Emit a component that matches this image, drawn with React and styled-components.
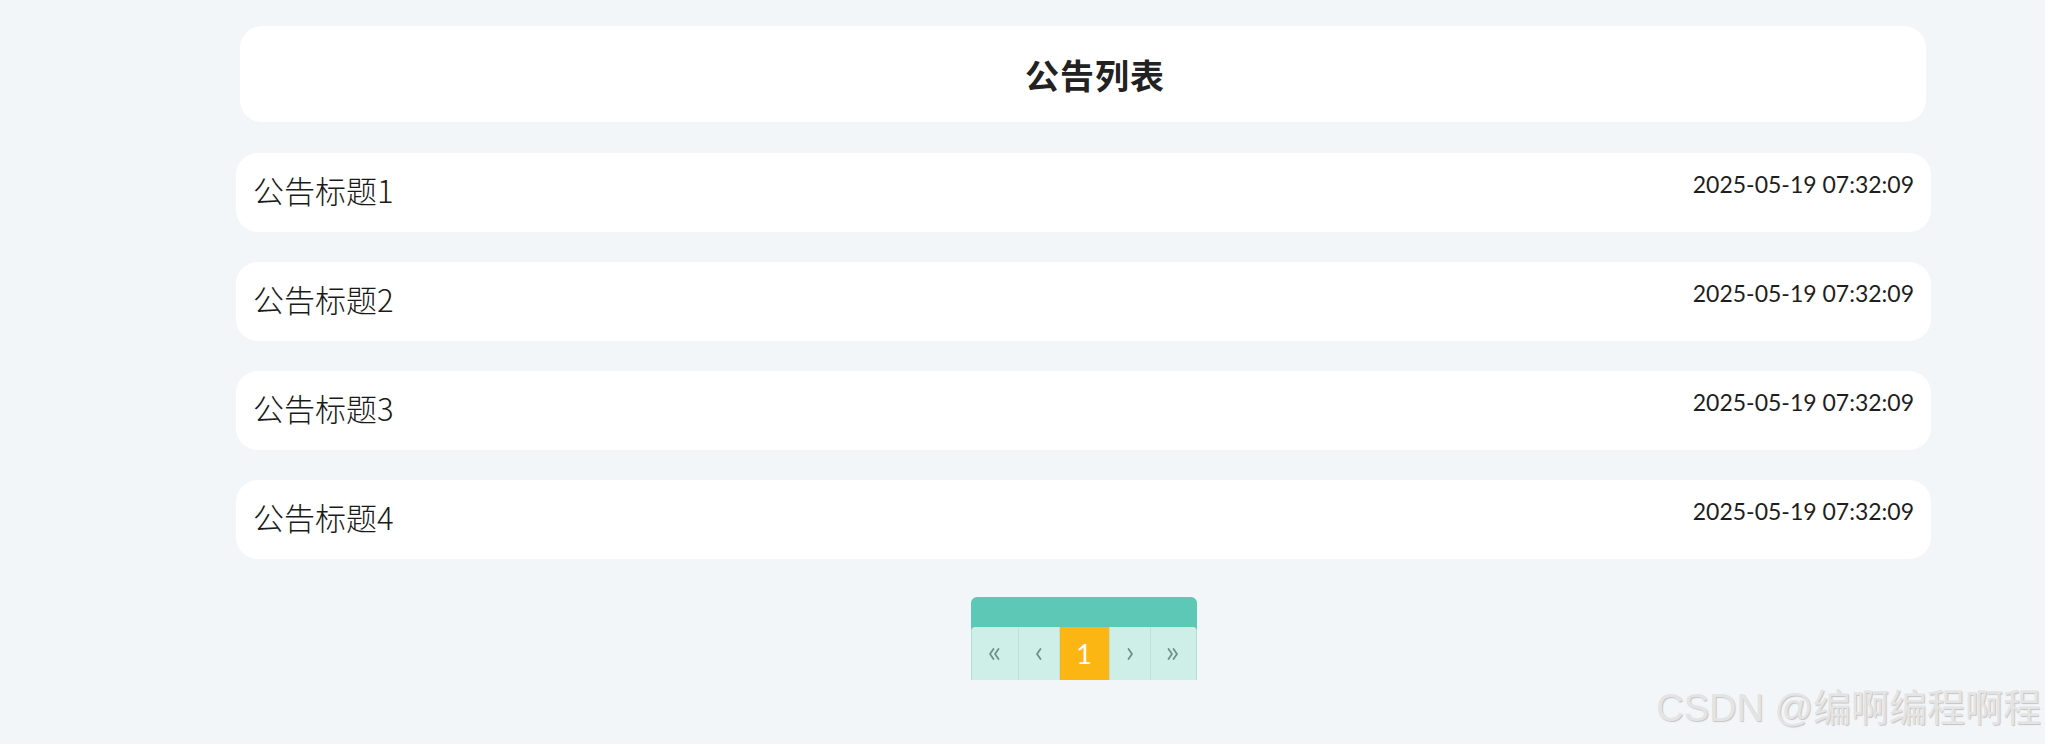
import React from 'react';
import styled, { createGlobalStyle } from 'styled-components';

const notices = [
  { id: 1, title: '公告标题1', time: '2025-05-19 07:32:09' },
  { id: 2, title: '公告标题2', time: '2025-05-19 07:32:09' },
  { id: 3, title: '公告标题3', time: '2025-05-19 07:32:09' },
  { id: 4, title: '公告标题4', time: '2025-05-19 07:32:09' },
];

const GlobalStyle = createGlobalStyle`
  html, body {
    margin: 0;
    padding: 0;
    background: #f3f6f9;
  }
  body {
    font-family: "Lato", "Noto Sans CJK SC", sans-serif;
    color: #222;
  }
`;

const Page = styled.div`
  position: relative;
  width: 2045px;
  height: 744px;
  box-sizing: border-box;
  padding: 26px 0 0 236px;
  overflow: hidden;
`;

const Container = styled.div`
  width: 1695px;
  display: flex;
  flex-direction: column;
`;

const Header = styled.div`
  height: 96px;
  margin: 0 5px 0 4px;
  background: #fff;
  border-radius: 22px;
  display: flex;
  align-items: center;
  justify-content: center;
  padding-left: 24px;
`;

const Title = styled.h2`
  margin: 0;
  font-family: "Noto Sans CJK SC", sans-serif;
  font-size: 34px;
  font-weight: 700;
  letter-spacing: 1px;
  color: #222;
`;

const List = styled.ul`
  list-style: none;
  margin: 31px 0 0;
  padding: 0;
  display: flex;
  flex-direction: column;
  gap: 30px;
`;

const Row = styled.li`
  height: 79px;
  background: #fff;
  border-radius: 22px;
  box-sizing: border-box;
  padding: 0 17px;
  display: flex;
  align-items: center;
  justify-content: space-between;
`;

const RowTitle = styled.span`
  font-family: "Noto Sans CJK SC", sans-serif;
  font-size: 31px;
  line-height: 1;
  font-weight: 300;
  color: #1a1a1a;
  margin-top: -6px;
`;

const RowTime = styled.span`
  align-self: flex-start;
  margin-top: 17px;
  font-size: 23px;
  font-weight: 400;
  color: #1e1e1e;
`;

const Pager = styled.div`
  align-self: center;
  margin-top: 38px;
  width: 226px;
  padding-top: 30px;
  background: #5dc8b6;
  border-radius: 6px 6px 0 0;
  display: flex;
`;

const PageBtn = styled.button`
  width: ${p => p.w}px;
  height: 53px;
  border: none;
  border-left: 1px solid #bfe1da;
  padding: 0;
  margin: 0;
  background: ${p => (p.active ? '#fbb614' : '#cdefe7')};
  color: ${p => (p.active ? '#ffffff' : '#6f8f8c')};
  font-family: "Lato", sans-serif;
  font-size: ${p => (p.active ? 27 : 17)}px;
  font-weight: 400;
  display: flex;
  align-items: center;
  justify-content: center;
  cursor: pointer;

  &:first-child {
    border-left: 1px solid #b5ddd4;
    border-radius: 4px 0 0 0;
  }
  &:last-child {
    border-right: 1px solid #b5ddd4;
    border-radius: 0 4px 0 0;
  }
`;

const Watermark = styled.div`
  position: absolute;
  right: 4px;
  bottom: 12px;
  font-family: "Liberation Sans", "Noto Sans CJK SC", sans-serif;
  font-size: 38px;
  font-weight: 400;
  color: #e4e4e4;
  text-shadow: 1px 1px 1px #c4c4c4;
  white-space: nowrap;
`;

const Chevron = ({ dir, double }) => {
  const d = dir === 'left' ? 'M5.5 2 L2 7 L5.5 12' : 'M2.5 2 L6 7 L2.5 12';
  return (
    <svg width={double ? 14 : 8} height="14" viewBox={`0 0 ${double ? 14 : 8} 14`} fill="none" stroke="#6f8f8c" strokeWidth="1.8" strokeLinecap="round" strokeLinejoin="round">
      <path d={d} />
      {double && <path d={d} transform="translate(5 0)" />}
    </svg>
  );
};

export default function App() {
  return (
    <>
      <GlobalStyle />
      <Page>
        <Container>
          <Header>
            <Title>公告列表</Title>
          </Header>
          <List>
            {notices.map(n => (
              <Row key={n.id}>
                <RowTitle>{n.title}</RowTitle>
                <RowTime>{n.time}</RowTime>
              </Row>
            ))}
          </List>
          <Pager>
            <PageBtn w={47}><Chevron dir="left" double /></PageBtn>
            <PageBtn w={41}><Chevron dir="left" /></PageBtn>
            <PageBtn w={50} active>1</PageBtn>
            <PageBtn w={41}><Chevron dir="right" /></PageBtn>
            <PageBtn w={47}><Chevron dir="right" double /></PageBtn>
          </Pager>
        </Container>
        <Watermark>CSDN @编啊编程啊程</Watermark>
      </Page>
    </>
  );
}
